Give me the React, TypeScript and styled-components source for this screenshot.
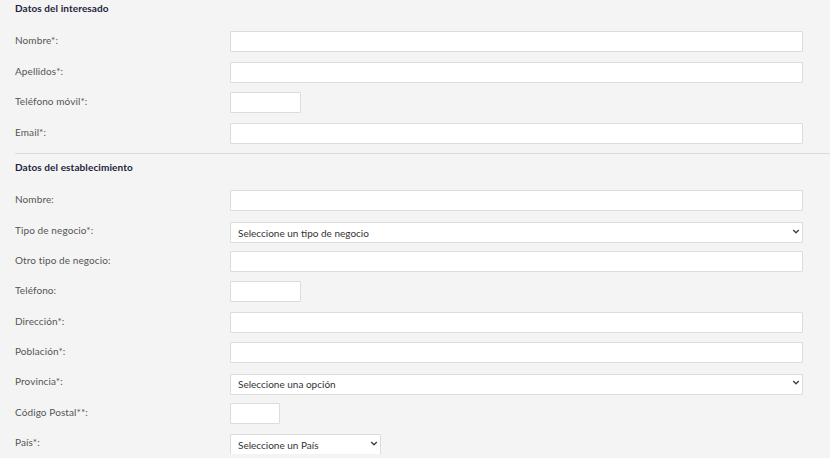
import styled, { createGlobalStyle } from "styled-components";

const GlobalStyle = createGlobalStyle`
  html, body {
    margin: 0;
    padding: 0;
    background: #f4f4f4;
    font-family: Lato, "Open Sans", sans-serif;
    overflow: hidden;
  }
`;

const Form = styled.form`
  padding-left: 15px;
  width: 100%;
  box-sizing: border-box;
`;

const SectionTitle = styled.h3<{ $top: number }>`
  margin: ${(p) => p.$top}px 0 0;
  font-size: 10px;
  line-height: 17px;
  font-weight: 700;
  color: #231e3c;
  letter-spacing: 0.1px;
`;

const Rows = styled.div<{ $gap: number }>`
  display: flex;
  flex-direction: column;
  gap: ${(p) => p.$gap}px;
  margin-top: 14px;
  padding-right: 27px;
`;

const Row = styled.div`
  display: grid;
  grid-template-columns: 215px 1fr;
  align-items: center;
  height: 21px;
`;

const Label = styled.label`
  font-size: 10px;
  color: #555;
  line-height: 12px;
  margin-top: -3px;
  letter-spacing: 0.1px;
`;

const Input = styled.input<{ $width?: number }>`
  box-sizing: border-box;
  height: 21px;
  width: ${(p) => (p.$width ? `${p.$width}px` : "100%")};
  border: 1px solid #dcdcdc;
  border-radius: 1px;
  background: #fff;
  margin: 0;
  padding: 0 7px;
  font-family: inherit;
  font-size: 10px;
  outline: none;
`;

const SelectWrap = styled.div<{ $width?: number }>`
  position: relative;
  width: ${(p) => (p.$width ? `${p.$width}px` : "100%")};
  height: 21px;
`;

const Select = styled.select`
  appearance: none;
  box-sizing: border-box;
  width: 100%;
  height: 21px;
  border: 1px solid #dcdcdc;
  border-radius: 1px;
  background: #fff;
  margin: 0;
  padding: 0 20px 0 7px;
  font-family: inherit;
  font-size: 10px;
  color: #333;
  outline: none;
`;

const Chevron = styled.svg`
  position: absolute;
  right: 3px;
  top: 7px;
  width: 8px;
  height: 7px;
  pointer-events: none;
`;

const Divider = styled.hr`
  margin: 9px 0 0;
  border: 0;
  border-top: 1px solid #dcdcdc;
`;

type Field = {
  label: string;
  kind: "input" | "select";
  width?: number;
  placeholder?: string;
};

const interesado: Field[] = [
  { label: "Nombre*:", kind: "input" },
  { label: "Apellidos*:", kind: "input" },
  { label: "Teléfono móvil*:", kind: "input", width: 71 },
  { label: "Email*:", kind: "input" },
];

const establecimiento: Field[] = [
  { label: "Nombre:", kind: "input" },
  { label: "Tipo de negocio*:", kind: "select", placeholder: "Seleccione un tipo de negocio" },
  { label: "Otro tipo de negocio:", kind: "input" },
  { label: "Teléfono:", kind: "input", width: 71 },
  { label: "Dirección*:", kind: "input" },
  { label: "Población*:", kind: "input" },
  { label: "Provincia*:", kind: "select", placeholder: "Seleccione una opción" },
  { label: "Código Postal**:", kind: "input", width: 50 },
  { label: "País*:", kind: "select", width: 151, placeholder: "Seleccione un País" },
];

function FieldRow({ field }: { field: Field }) {
  return (
    <Row>
      <Label>{field.label}</Label>
      {field.kind === "input" ? (
        <Input $width={field.width} />
      ) : (
        <SelectWrap $width={field.width}>
          <Select defaultValue="">
            <option value="">{field.placeholder}</option>
          </Select>
          <Chevron viewBox="0 0 8 7">
            <path d="M1.2 2 L4 4.8 L6.8 2" fill="none" stroke="#444" strokeWidth="1.4" />
          </Chevron>
        </SelectWrap>
      )}
    </Row>
  );
}

export default function App() {
  return (
    <>
      <GlobalStyle />
      <Form>
        <SectionTitle $top={0}>Datos del interesado</SectionTitle>
        <Rows $gap={9.67}>
          {interesado.map((f) => (
            <FieldRow key={f.label} field={f} />
          ))}
        </Rows>
        <Divider />
        <SectionTitle $top={5.5}>Datos del establecimiento</SectionTitle>
        <Rows $gap={9.3}>
          {establecimiento.map((f) => (
            <FieldRow key={f.label} field={f} />
          ))}
        </Rows>
      </Form>
    </>
  );
}
